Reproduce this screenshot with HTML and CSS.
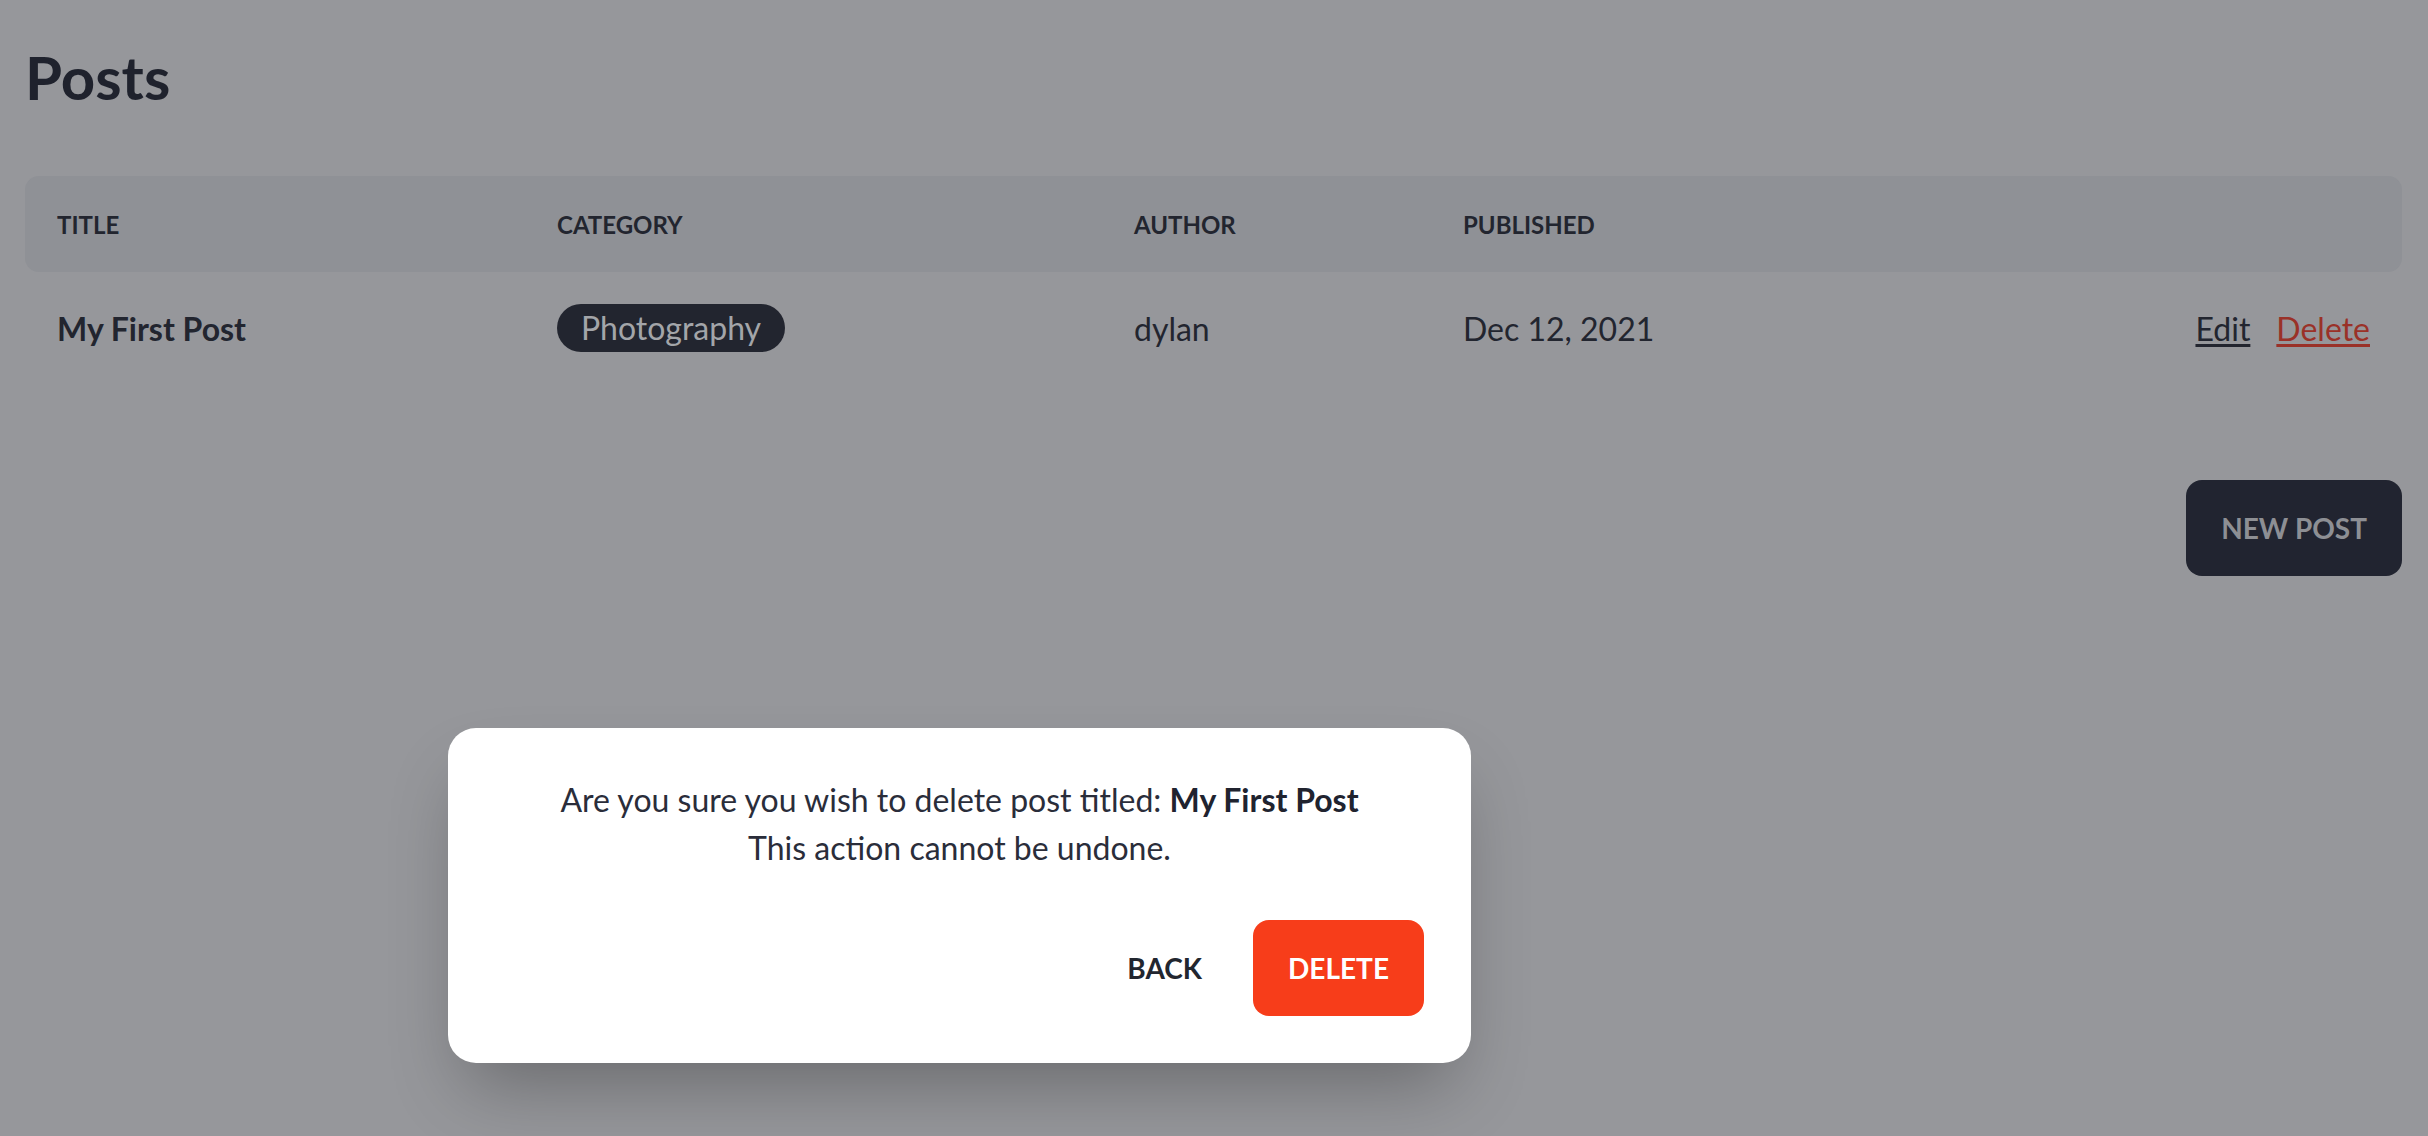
FILE: index.html
```html
<!DOCTYPE html>
<html lang="en">
<head>
<meta charset="utf-8">
<title>Posts</title>
<link rel="stylesheet" href="styles.css">
</head>
<body>
<main class="page">
  <h1 class="title">Posts</h1>
  <div class="table">
    <div class="thead">
      <div class="th">Title</div>
      <div class="th">Category</div>
      <div class="th">Author</div>
      <div class="th">Published</div>
      <div class="th"></div>
    </div>
    <div class="row">
      <div class="td post-title">My First Post</div>
      <div class="td"><span class="pill">Photography</span></div>
      <div class="td">dylan</div>
      <div class="td">Dec 12, 2021</div>
      <div class="td actions"><a class="link edit" href="#">Edit</a><a class="link delete" href="#">Delete</a></div>
    </div>
  </div>
  <div class="toolbar">
    <button class="btn btn-dark">New Post</button>
  </div>
</main>
<div class="modal">
  <p class="modal-text">Are you sure you wish to delete post titled: <strong>My First Post</strong><br>This action cannot be undone.</p>
  <div class="modal-actions">
    <button class="btn btn-plain">Back</button>
    <button class="btn btn-danger">Delete</button>
  </div>
</div>
</body>
</html>
```
FILE: styles.css
```css
* { box-sizing: border-box; }
html, body { margin: 0; height: 100%; }
body {
  background: #96979b;
  font-family: Lato, "Noto Sans", sans-serif;
  color: #20232f;
  overflow: hidden;
  position: relative;
}
.page { padding: 41px 26px 0 25px; }
.title {
  margin: 0;
  font-size: 60px;
  line-height: 72px;
  font-weight: 700;
  color: #1f222d;
}
.table { margin-top: 63px; }
.thead, .row {
  display: grid;
  grid-template-columns: 500px 577px 329px 1fr auto;
  align-items: center;
}
.thead {
  height: 96px;
  background: #8f9196;
  border-radius: 14px;
}
.th {
  padding: 0 32px;
  font-size: 24px;
  font-weight: 700;
  text-transform: uppercase;
  color: #22252f;
}
.row { height: 112px; }
.td {
  padding: 0 32px;
  font-size: 32px;
  color: #22252f;
}
.post-title { font-weight: 700; }
.pill {
  display: inline-block;
  background: #22252f;
  color: #a3a5a9;
  border-radius: 24px;
  padding: 0 24px;
  height: 48px;
  line-height: 48px;
}
.actions { display: flex; gap: 26px; }
.link {
  text-decoration: underline;
  text-underline-offset: 3px;
  text-decoration-thickness: 3px;
}
.edit { color: #22252f; }
.delete { color: #9a3128; }
.toolbar {
  display: flex;
  justify-content: flex-end;
  margin-top: 96px;
}
.btn {
  height: 96px;
  padding: 0 35px;
  border: 0;
  border-radius: 16px;
  font-family: inherit;
  font-size: 28px;
  font-weight: 700;
  text-transform: uppercase;
  white-space: nowrap;
  cursor: pointer;
}
.btn-dark { background: #212430; color: #8d8f94; }
.modal {
  position: absolute;
  left: 448px;
  top: 728px;
  width: 1023px;
  padding: 48px 47px 47px;
  background: #fff;
  border-radius: 28px;
  box-shadow: 0 38px 75px -18px rgba(0, 0, 0, 0.3);
}
.modal-text {
  margin: 0;
  text-align: center;
  font-size: 32px;
  line-height: 48px;
  color: #2a2d3a;
}
.modal-text strong { color: #20232f; }
.modal-actions {
  display: flex;
  justify-content: flex-end;
  gap: 16px;
  margin-top: 48px;
}
.btn-plain { background: transparent; color: #22262f; }
.btn-danger { background: #f73d1a; color: #fff; }
```
